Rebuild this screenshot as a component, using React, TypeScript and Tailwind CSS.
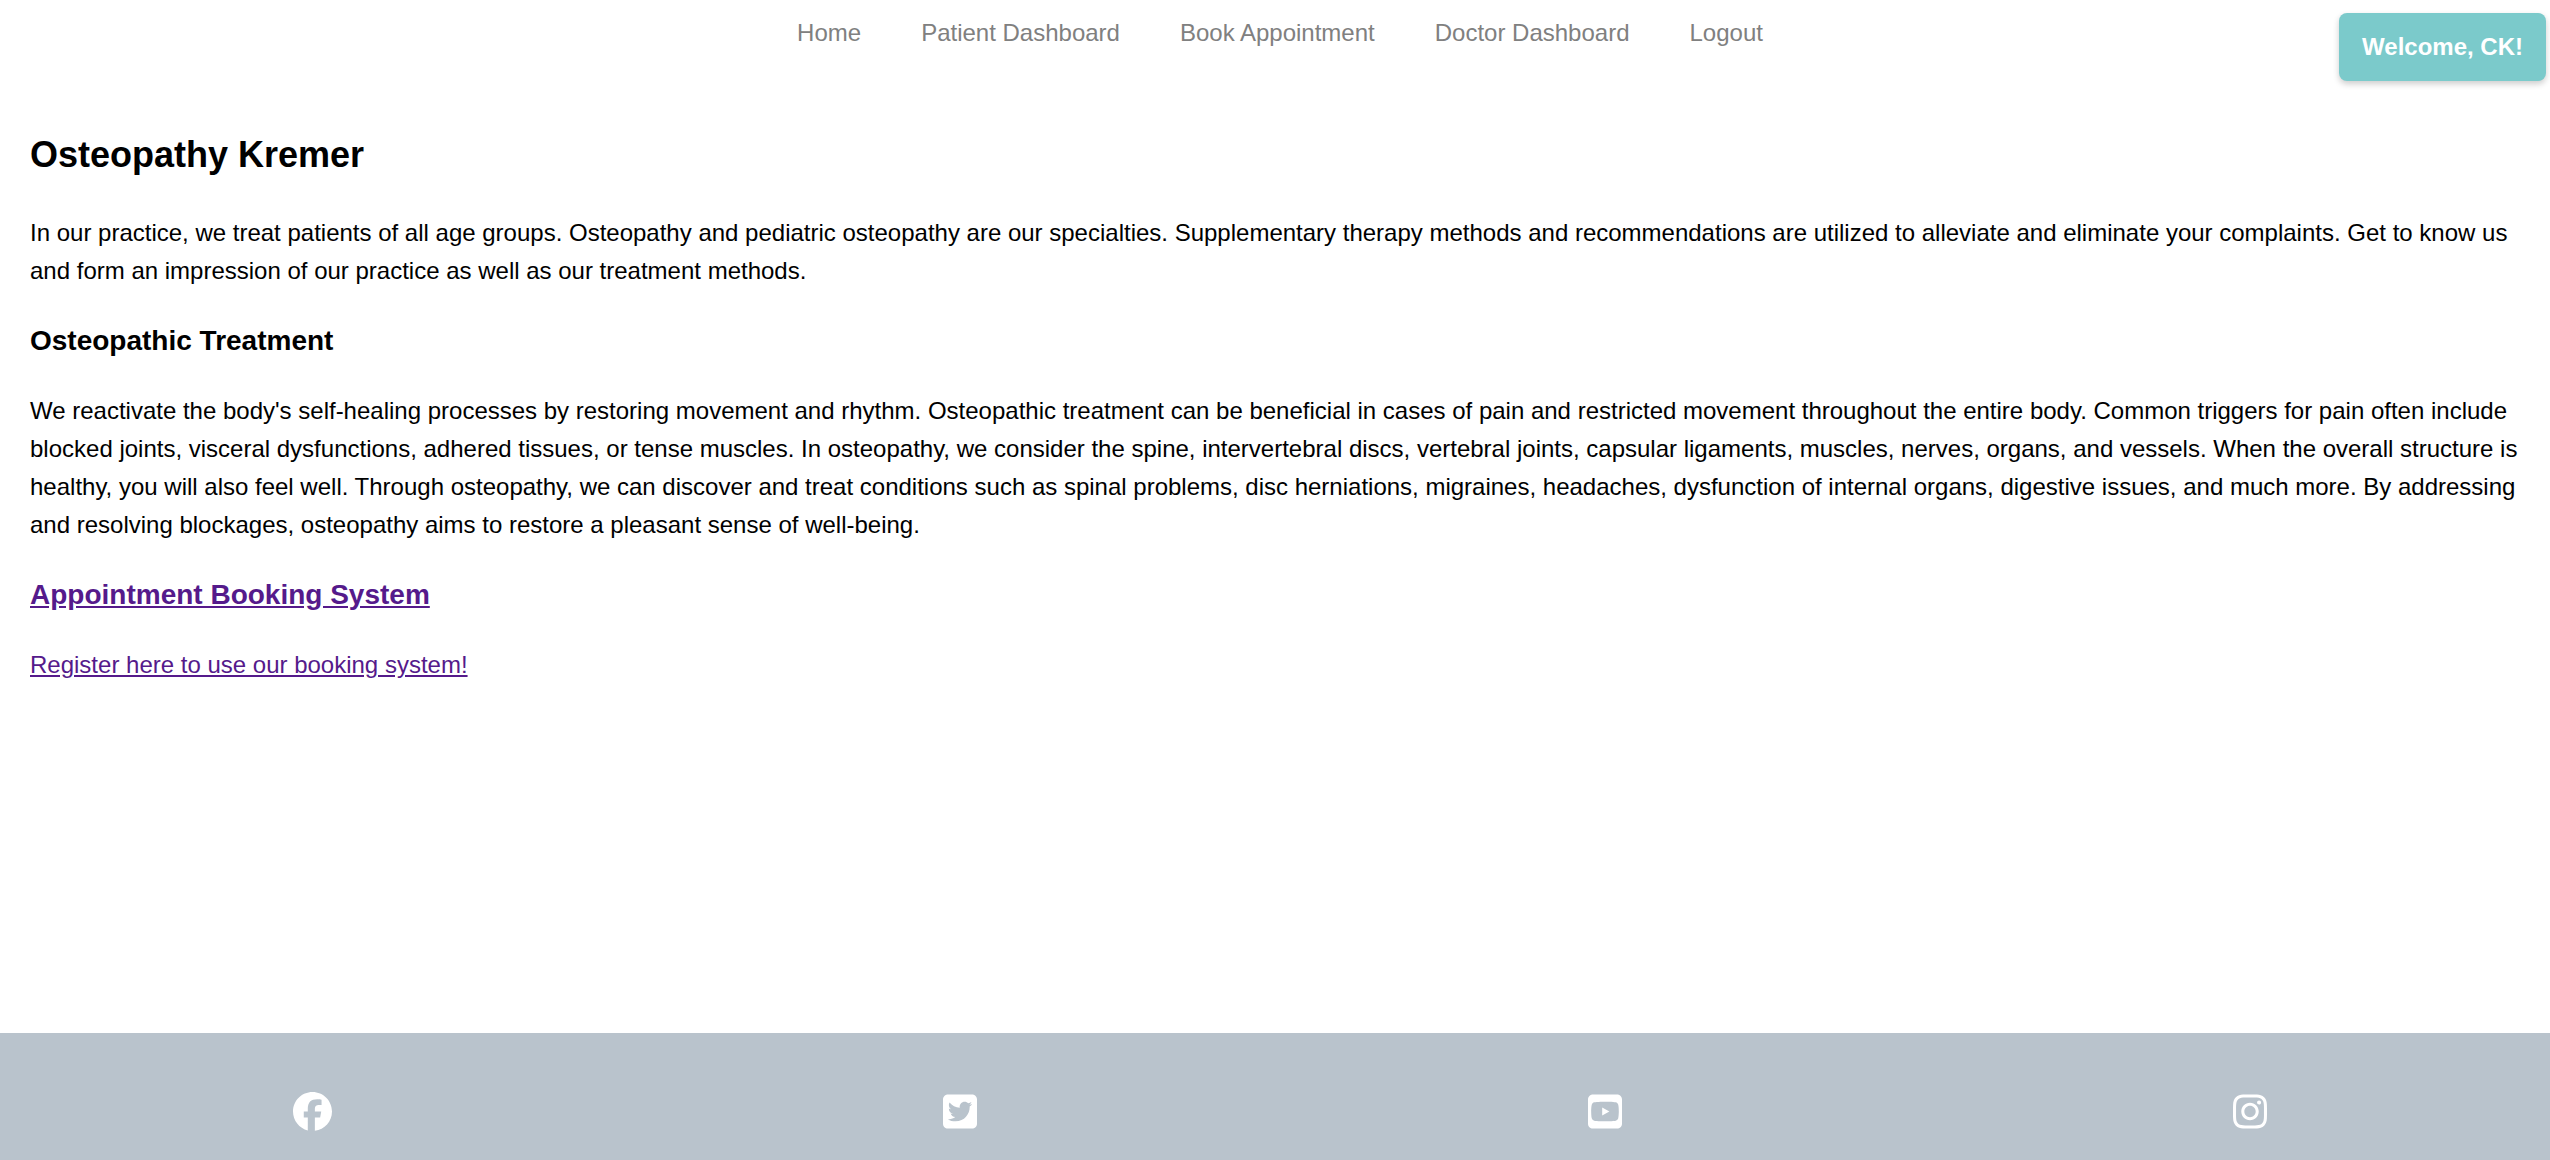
import React from "react";
import { FaInstagram, FaSquareTwitter, FaSquareYoutube } from "react-icons/fa6";

const navLinks = [
  "Home",
  "Patient Dashboard",
  "Book Appointment",
  "Doctor Dashboard",
  "Logout",
];

function FacebookIcon({ className }: { className?: string }) {
  return (
    <svg
      viewBox="0 0 512 512"
      fill="currentColor"
      className={className}
      aria-hidden="true"
    >
      <path d="M512 256C512 114.6 397.4 0 256 0S0 114.6 0 256C0 376 82.7 476.8 194.2 504.5V334.2H141.4V256h52.8V222.3c0-87.1 39.4-127.5 125-127.5 16.2 0 44.2 3.2 55.7 6.4V172c-6-.6-16.5-1-29.6-1-42 0-58.2 15.9-58.2 57.2V256h83.6l-14.4 78.2H287V510.1C413.8 494.8 512 386.9 512 256z" />
    </svg>
  );
}

const socialLinks = [
  { label: "Facebook", Icon: FacebookIcon, size: "h-[39px] w-[39px]" },
  { label: "Twitter", Icon: FaSquareTwitter, size: "h-[39px] w-[34px]" },
  { label: "YouTube", Icon: FaSquareYoutube, size: "h-[39px] w-[34px]" },
  { label: "Instagram", Icon: FaInstagram, size: "h-[39px] w-[34px]" },
];

function Header() {
  return (
    <header className="relative pt-[14px] pb-[43px] pl-2.5">
      <nav aria-label="Main">
        <ul className="flex flex-wrap justify-center gap-x-[60px]">
          {navLinks.map((label) => (
            <li key={label}>
              <a href="#" className="text-[#808080]">
                {label}
              </a>
            </li>
          ))}
        </ul>
      </nav>
      <div className="absolute top-[13px] right-1 rounded-lg bg-[#7bcacb] px-[23px] py-[15px] font-bold text-white shadow-[0_3px_6px_rgba(0,0,0,0.2)]">
        Welcome, CK!
      </div>
    </header>
  );
}

function Footer() {
  return (
    <footer className="bg-[#b9c3cc] pt-[59px] pb-[29px]">
      <ul className="flex items-center justify-between pr-[11.1%] pl-[11.5%]">
        {socialLinks.map(({ label, Icon, size }) => (
          <li key={label}>
            <a href="#" aria-label={label} className="block text-white">
              <Icon className={size} />
            </a>
          </li>
        ))}
      </ul>
    </footer>
  );
}

export default function App() {
  return (
    <div className="flex min-h-screen flex-col bg-white font-['Liberation_Sans',Arial,sans-serif] text-[24px] leading-[38px] text-black">
      <Header />
      <main className="flex flex-1 flex-col gap-[29px] p-[30px]">
        <h2 className="text-[36px] leading-[60px] font-bold">
          Osteopathy Kremer
        </h2>
        <p>
          In our practice, we treat patients of all age groups. Osteopathy and
          pediatric osteopathy are our specialties. Supplementary therapy
          methods and recommendations are utilized to alleviate and eliminate
          your complaints. Get to know us and form an impression of our practice
          as well as our treatment methods.
        </p>
        <h3 className="text-[28px] leading-[44px] font-bold">
          Osteopathic Treatment
        </h3>
        <p>
          We reactivate the body's self-healing processes by restoring movement
          and rhythm. Osteopathic treatment can be beneficial in cases of pain
          and restricted movement throughout the entire body. Common triggers
          for pain often include blocked joints, visceral dysfunctions, adhered
          tissues, or tense muscles. In osteopathy, we consider the spine,
          intervertebral discs, vertebral joints, capsular ligaments, muscles,
          nerves, organs, and vessels. When the overall structure is healthy,
          you will also feel well. Through osteopathy, we can discover and treat
          conditions such as spinal problems, disc herniations, migraines,
          headaches, dysfunction of internal organs, digestive issues, and much
          more. By addressing and resolving blockages, osteopathy aims to
          restore a pleasant sense of well-being.
        </p>
        <h3 className="text-[28px] leading-[44px] font-bold">
          <a href="#" className="text-[#551a8b] underline">
            Appointment Booking System
          </a>
        </h3>
        <p>
          <a href="#" className="text-[#551a8b] underline">
            Register here to use our booking system!
          </a>
        </p>
      </main>
      <Footer />
    </div>
  );
}
